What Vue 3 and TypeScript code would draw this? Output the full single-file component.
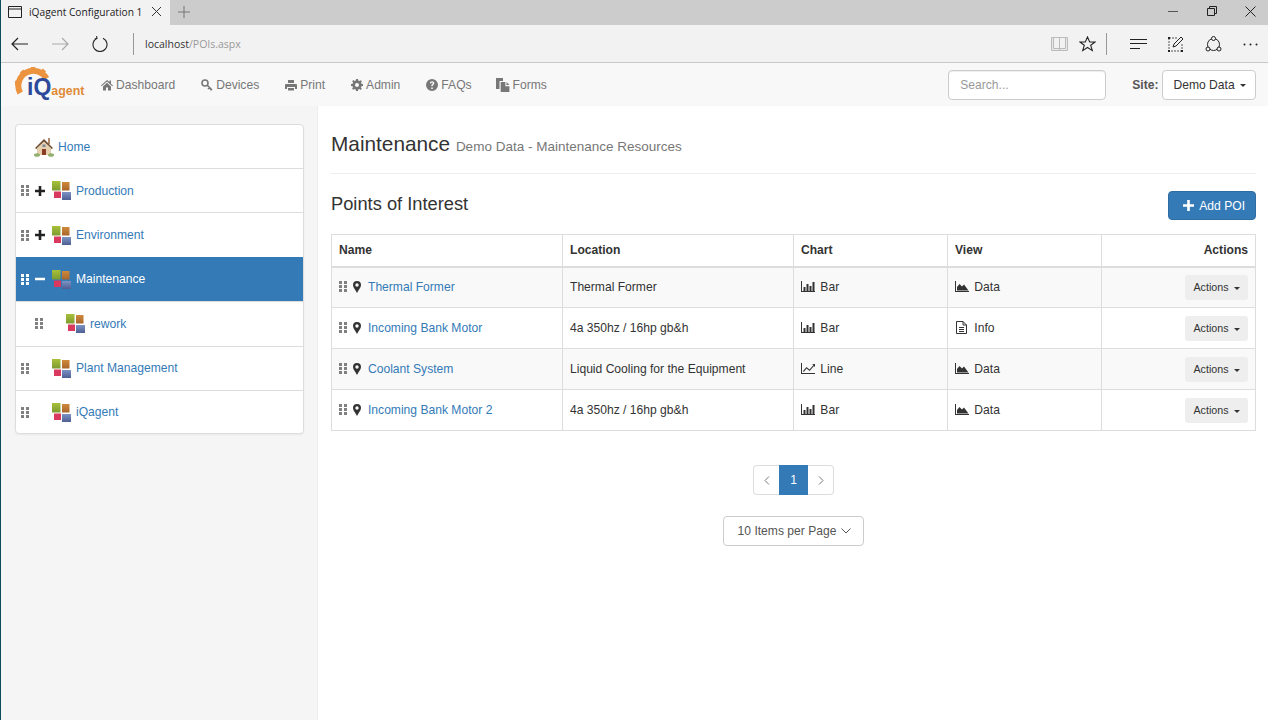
<script setup lang="ts">
type Node = { label: string; level: number; toggle?: 'plus' | 'minus'; active?: boolean };
type Row = { name: string; location: string; chart: 'Bar' | 'Line'; view: 'Data' | 'Info' };

const navItems = [
  { label: 'Dashboard', icon: 'home' },
  { label: 'Devices', icon: 'key' },
  { label: 'Print', icon: 'print' },
  { label: 'Admin', icon: 'cog' },
  { label: 'FAQs', icon: 'help' },
  { label: 'Forms', icon: 'copy' },
];

const tree: Node[] = [
  { label: 'Production', level: 0, toggle: 'plus' },
  { label: 'Environment', level: 0, toggle: 'plus' },
  { label: 'Maintenance', level: 0, toggle: 'minus', active: true },
  { label: 'rework', level: 1 },
  { label: 'Plant Management', level: 0 },
  { label: 'iQagent', level: 0 },
];

const rows: Row[] = [
  { name: 'Thermal Former', location: 'Thermal Former', chart: 'Bar', view: 'Data' },
  { name: 'Incoming Bank Motor', location: '4a 350hz / 16hp gb&h', chart: 'Bar', view: 'Info' },
  { name: 'Coolant System', location: 'Liquid Cooling for the Equipment', chart: 'Line', view: 'Data' },
  { name: 'Incoming Bank Motor 2', location: '4a 350hz / 16hp gb&h', chart: 'Bar', view: 'Data' },
];
</script>

<template>
  <div class="page">
    <!-- browser chrome -->
    <div class="tabbar">
      <div class="tab">
        <svg class="tab-icon" width="14" height="12" viewBox="0 0 14 12">
          <path d="M.5.5h13v11H.5zM.5 3h13" fill="none" stroke="#222" />
        </svg>
        <span class="tab-title">iQagent Configuration 1</span>
        <svg width="11" height="11" viewBox="0 0 11 11"><path d="M1 1l9 9M10 1l-9 9" stroke="#333" fill="none" /></svg>
      </div>
      <svg class="new-tab" width="12" height="12" viewBox="0 0 12 12"><path d="M6 0v12M0 6h12" stroke="#777" fill="none" /></svg>
      <div class="win-controls">
        <svg width="10" height="10" viewBox="0 0 10 10"><path d="M0 5.500h10" stroke="#555" fill="none" /></svg>
        <svg width="10" height="10" viewBox="0 0 10 10"><path d="M.5 2.500h7v7h-7zM2.500 2.500v-2h7v7h-2" stroke="#222" fill="none" /></svg>
        <svg width="11" height="11" viewBox="0 0 11 11"><path d="M.5.5l10 10M10.500.5l-10 10" stroke="#222" fill="none" /></svg>
      </div>
    </div>

    <div class="addressbar">
      <svg class="nav-btn" width="18" height="14" viewBox="0 0 18 14"><path d="M17 7H1M7 1L1 7l6 6" stroke="#222" stroke-width="1.200" fill="none" /></svg>
      <svg class="nav-btn dim" width="18" height="14" viewBox="0 0 18 14"><path d="M1 7h16M11 1l6 6-6 6" stroke="#aaa" stroke-width="1.200" fill="none" /></svg>
      <svg class="nav-btn reload" width="16" height="16" viewBox="0 0 16 16"><path d="M5 2.200A7 7 0 1 0 11 2.200M4.500 .2L5 2.400 2.800 3" stroke="#222" stroke-width="1.100" fill="none" /></svg>
      <span class="addr-sep"></span>
      <span class="url"><span class="host">localhost</span>/POIs.aspx</span>
      <div class="addr-tools">
        <svg width="17" height="14" viewBox="0 0 17 14"><path d="M.5.5h16v13H.5zM8.500.5v13M2.500.5v11h12V.500" stroke="#bbb" fill="#e8e8e8" /></svg>
        <svg class="star" width="17" height="16" viewBox="0 0 17 16"><path d="M8.500 1l2.200 5h5.300l-4.300 3.300 1.600 5.300-4.800-3.100-4.800 3.100 1.600-5.300L1 6h5.300z" stroke="#222" stroke-width="1.100" fill="none" /></svg>
        <span class="addr-sep tool-sep"></span>
        <svg class="hub" width="17" height="12" viewBox="0 0 17 12"><path d="M0 1.500h17M0 5.500h17M0 10.500h10" stroke="#222" fill="none" /></svg>
        <svg class="note" width="17" height="17" viewBox="0 0 17 17"><path d="M2 2v13h13M2 2h8M15 8v7" stroke="#555" stroke-dasharray="2 1" fill="none" /><path d="M6 11l1-3 7-7 2 2-7 7z" stroke="#222" fill="none" /><path d="M1 1h2v2H1zM14 14h2v2h-2zM1 14h2v2H1z" fill="#222" /></svg>
        <svg class="share" width="17" height="17" viewBox="0 0 17 17"><circle cx="8.500" cy="8.500" r="6" stroke="#222" fill="none" /><circle cx="8.500" cy="2.500" r="2" fill="#f2f2f2" stroke="#222" /><circle cx="3" cy="13" r="2" fill="#f2f2f2" stroke="#222" /><circle cx="14" cy="13" r="2" fill="#f2f2f2" stroke="#222" /></svg>
        <svg class="dots" width="15" height="3" viewBox="0 0 15 3"><circle cx="1.500" cy="1.500" r="1" fill="#222" /><circle cx="7.500" cy="1.500" r="1" fill="#222" /><circle cx="13.500" cy="1.500" r="1" fill="#222" /></svg>
      </div>
    </div>

    <!-- app navbar -->
    <nav class="navbar">
      <div class="logo">
        <svg class="gear" width="38" height="32" viewBox="0 0 38 32">
          <path d="M5.200 26A15 15 0 1 1 31.500 11.500" fill="none" stroke="#ec9340" stroke-width="6" />
          <path d="M18 0v4M6.500 4l3 3M29.500 3l-3 3M0 16h4" stroke="#ec9340" stroke-width="4.500" />
        </svg>
        <span class="logo-i">i</span><span class="logo-q">Q</span><span class="logo-rest">agent</span>
      </div>
      <ul class="nav-links">
        <li v-for="item in navItems" :key="item.label">
          <svg class="nav-icon" width="12" height="12" viewBox="0 0 12 12">
            <path v-if="item.icon === 'home'" d="M6 1L0 6.500l.7.700L6 2.500l5.300 4.700.7-.7-2-1.800V1.500H8.500v1.600zM2 7.500V11.500h3V8.500h2v3h3V7.500L6 3.800z" />
            <g v-else-if="item.icon === 'key'">
              <circle cx="4" cy="4" r="3" fill="none" stroke="currentColor" stroke-width="1.600" />
              <path d="M6 6l5 5M8.500 8.500l-1.500 1.500M10 10l-1 1" stroke="currentColor" stroke-width="1.600" fill="none" />
            </g>
            <path v-else-if="item.icon === 'print'" d="M3 1h6v3H3zM1 5h10a1 1 0 0 1 1 1v4h-2V8H2v2H0V6a1 1 0 0 1 1-1zM3 9h6v2.500H3z" />
            <path v-else-if="item.icon === 'cog'" fill-rule="evenodd" d="M5 0h2l.3 1.600 1.100.5L9.800 1.200l1.100 1.100-.9 1.400.5 1.100L12 5v2l-1.600.3-.5 1.100.9 1.400-1.100 1.100-1.400-.9-1.100.5L7 12H5l-.3-1.600-1.100-.5-1.400.9-1.100-1.100.9-1.400-.5-1.100L0 7V5l1.600-.3.500-1.100-.9-1.400 1.100-1.100 1.400.9 1.100-.5zM6 4a2 2 0 1 0 0 4 2 2 0 0 0 0-4z" />
            <path v-else-if="item.icon === 'help'" fill-rule="evenodd" d="M6 0a6 6 0 1 0 0 12A6 6 0 0 0 6 0zM5.200 8.500h1.600V10H5.200zM3.800 4.300C3.900 3 4.800 2.300 6.100 2.300c1.300 0 2.200.8 2.200 1.900 0 1-.6 1.400-1.100 1.800-.4.300-.5.500-.5 1.200H5.300c0-1 .2-1.500.8-1.900.4-.3.700-.6.700-1 0-.4-.3-.7-.8-.7-.5 0-.8.300-.8.800z" />
            <path v-else d="M0 0h6v2.500H3v7H0zM4 3.500h4V7h3.500v5H4zM9 3.500L11.500 6H9z" />
          </svg>
          {{ item.label }}
        </li>
      </ul>
      <div class="nav-right">
        <input class="search" type="text" placeholder="Search..." />
        <span class="site-label">Site:</span>
        <button class="site-btn">Demo Data <span class="caret"></span></button>
      </div>
    </nav>

    <div class="content">
      <aside class="sidebar">
        <div class="tree">
          <div class="tree-row home-row">
            <svg class="house" width="20" height="20" viewBox="0 0 20 20">
              <rect x="14" y="1" width="2" height="6" fill="#b08a6a" />
              <path d="M1 11L10 2l9 9-1.500 1L10 5l-7.500 7z" fill="#6b4a30" />
              <path d="M3 11l7-6.500 7 6.500v7H3z" fill="#e6cfae" />
              <rect x="8" y="12" width="4" height="6" fill="#8a3d26" />
              <rect x="8.500" y="7.500" width="3" height="2.500" fill="#7c8a96" />
              <ellipse cx="3" cy="18" rx="3" ry="1.800" fill="#8fae6a" />
              <ellipse cx="17" cy="18" rx="3" ry="1.800" fill="#8fae6a" />
            </svg>
            <a class="link">Home</a>
          </div>
          <div
            v-for="node in tree"
            :key="node.label"
            class="tree-row"
            :class="{ active: node.active, nested: node.level > 0 }"
          >
            <svg class="grip" width="8" height="11" viewBox="0 0 8 11">
              <path d="M0 0h3v3H0zM5 0h3v3H5zM0 4h3v3H0zM5 4h3v3H5zM0 8h3v3H0zM5 8h3v3H5z" />
            </svg>
            <span class="toggle">
              <svg v-if="node.toggle" width="10" height="10" viewBox="0 0 10 10">
                <path v-if="node.toggle === 'plus'" d="M3.700 0h2.600v3.700H10v2.600H6.300V10H3.700V6.300H0V3.700h3.700z" />
                <path v-else d="M0 3.700h10v2.600H0z" />
              </svg>
            </span>
            <svg class="folder" width="19" height="19" viewBox="0 0 19 19">
              <defs>
                <linearGradient id="fg" x1="0" y1="0" x2="0" y2="1"><stop offset="0" stop-color="#a8c13a" /><stop offset="1" stop-color="#7d9a30" /></linearGradient>
                <linearGradient id="fo" x1="0" y1="0" x2="0" y2="1"><stop offset="0" stop-color="#d08a3c" /><stop offset="1" stop-color="#a9662c" /></linearGradient>
                <linearGradient id="fb" x1="0" y1="0" x2="0" y2="1"><stop offset="0" stop-color="#7c93c4" /><stop offset="1" stop-color="#4e5f93" /></linearGradient>
              </defs>
              <rect x="0" y="0" width="8.500" height="9.500" fill="url(#fg)" />
              <rect x="10" y="1" width="7.500" height="8.500" fill="url(#fo)" />
              <rect x="2" y="10.500" width="7" height="6.500" fill="#d9385f" />
              <rect x="10" y="11" width="9" height="8" fill="url(#fb)" />
            </svg>
            <a class="link">{{ node.label }}</a>
          </div>
        </div>
      </aside>

      <main class="main">
        <div class="page-header">
          <h1>Maintenance <small>Demo Data - Maintenance Resources</small></h1>
        </div>

        <div class="section-head">
          <h2>Points of Interest</h2>
          <button class="add-btn">
            <svg width="11" height="11" viewBox="0 0 10 10"><path d="M3.800 0h2.400v3.800H10v2.400H6.200V10H3.800V6.200H0V3.800h3.800z" fill="#fff" /></svg>
            Add POI
          </button>
        </div>

        <table class="poi-table">
          <colgroup>
            <col class="col-wide" />
            <col class="col-wide" />
            <col class="col-mid" />
            <col class="col-mid" />
            <col />
          </colgroup>
          <thead>
            <tr>
              <th>Name</th>
              <th>Location</th>
              <th>Chart</th>
              <th>View</th>
              <th class="right">Actions</th>
            </tr>
          </thead>
          <tbody>
            <tr v-for="row in rows" :key="row.name">
              <td>
                <svg class="grip row-grip" width="8" height="11" viewBox="0 0 8 11">
                  <path d="M0 0h3v3H0zM5 0h3v3H5zM0 4h3v3H0zM5 4h3v3H5zM0 8h3v3H0zM5 8h3v3H5z" />
                </svg>
                <svg class="pin" width="8" height="12" viewBox="0 0 8 12">
                  <path fill-rule="evenodd" d="M4 0a4 4 0 0 1 4 4c0 2.500-2.500 5-4 8C2.500 9 0 6.500 0 4a4 4 0 0 1 4-4zm0 2.300a1.700 1.700 0 1 0 0 3.400 1.700 1.700 0 0 0 0-3.400z" />
                </svg>
                <a class="link">{{ row.name }}</a>
              </td>
              <td>{{ row.location }}</td>
              <td>
                <svg class="cell-icon" width="14" height="11" viewBox="0 0 14 11">
                  <path d="M0 0h1v10h13v1H0z" />
                  <path v-if="row.chart === 'Bar'" d="M2.500 6h2v4h-2zM5.500 3h2v7h-2zM8.500 5h2v5h-2zM11.500 1h2v9h-2z" />
                  <path v-else d="M2 8l3.500-4 3 2.500L12.500 2 11 1h3v3.200l-1-1.200-4.400 5-3-2.500L2.800 9z" />
                </svg>
                {{ row.chart }}
              </td>
              <td>
                <svg v-if="row.view === 'Data'" class="cell-icon" width="14" height="11" viewBox="0 0 14 11">
                  <path d="M0 0h1v10h13v1H0z" />
                  <path d="M2 9.500V6l2.500-3 2.500 2.500L9 3.500l4.500 6z" />
                </svg>
                <svg v-else class="cell-icon info-icon" width="11" height="13" viewBox="0 0 11 13">
                  <path d="M.5.5h6.500l3.500 3.500v8.500H.5zM7 .5V4h3.500M3 6.500h5M3 8.500h5M3 10.500h5" fill="none" stroke="#333" />
                </svg>
                {{ row.view }}
              </td>
              <td class="right">
                <button class="action-btn">Actions <span class="caret"></span></button>
              </td>
            </tr>
          </tbody>
        </table>

        <div class="pager">
          <span class="page-cell">
            <svg width="6" height="9" viewBox="0 0 6 9"><path d="M5 .5l-4 4 4 4" stroke="#777" fill="none" /></svg>
          </span>
          <span class="page-cell current">1</span>
          <span class="page-cell">
            <svg width="6" height="9" viewBox="0 0 6 9"><path d="M1 .5l4 4-4 4" stroke="#777" fill="none" /></svg>
          </span>
        </div>

        <div class="per-page">
          <button class="per-page-btn">
            10 Items per Page
            <svg width="10" height="6" viewBox="0 0 10 6"><path d="M.5.5L5 5 9.500.5" stroke="#555" fill="none" /></svg>
          </button>
        </div>
      </main>
    </div>
  </div>
</template>

<style>
html,
body {
  margin: 0;
  overflow: hidden;
}
</style>

<style scoped>
.page {
  display: flex;
  flex-direction: column;
  width: 1268px;
  height: 720px;
  overflow: hidden;
  box-sizing: border-box;
  border-left: 1px solid #0e4d5c;
  font-family: "Liberation Sans", Arial, sans-serif;
  font-size: 12.100px;
  color: #333;
  background: #fff;
}

.tabbar {
  display: flex;
  align-items: center;
  height: 25px;
  flex: none;
  background: #cccccc;
}

.tab {
  display: flex;
  align-items: center;
  width: 169px;
  height: 25px;
  box-sizing: border-box;
  padding: 0 0 2px 7px;
  background: #f2f2f2;
}

.tab-icon {
  margin-right: 7px;
}

.tab-title {
  width: 115px;
  overflow: hidden;
  white-space: nowrap;
  font-family: "Open Sans", sans-serif;
  font-size: 10.200px;
  color: #222;
  margin-right: 7px;
}

.new-tab {
  margin: 0 0 2px 8px;
}

.win-controls {
  display: flex;
  align-items: center;
  gap: 28.500px;
  margin-left: auto;
  padding: 0 12px 3px 0;
}

.addressbar {
  display: flex;
  align-items: center;
  height: 38px;
  flex: none;
  box-sizing: border-box;
  padding: 1px 0 0 10px;
  background: #f2f2f2;
  border-bottom: 1px solid #c8c8c8;
}

.nav-btn {
  margin-right: 22px;
}

.nav-btn.dim {
  margin-right: 23px;
}

.nav-btn.reload {
  margin-right: 25px;
}

.addr-sep {
  display: inline-block;
  width: 1px;
  height: 22px;
  background: #999;
  margin: 0 11px 0 0;
}

.url {
  font-family: "Open Sans", sans-serif;
  font-size: 10.500px;
  color: #999;
}

.host {
  color: #333;
}

.addr-tools {
  display: flex;
  align-items: center;
  margin-left: auto;
  padding-right: 10px;
}

.star {
  margin-left: 11px;
}

.tool-sep {
  margin: 0 0 0 10px;
}

.hub {
  margin-left: 23px;
}

.note {
  margin-left: 20px;
}

.share {
  margin-left: 21px;
}

.dots {
  margin-left: 21px;
}

.navbar {
  display: flex;
  align-items: center;
  height: 43px;
  flex: none;
  box-sizing: border-box;
  background: #f8f8f8;
  color: #777;
}

.logo {
  position: relative;
  display: flex;
  align-items: baseline;
  width: 72px;
  height: 32px;
  margin-left: 14px;
  padding-top: 7px;
  box-sizing: border-box;
  font-weight: 700;
}

.gear {
  position: absolute;
  left: 0;
  top: -2px;
}

.logo-i,
.logo-q {
  position: relative;
  color: #2d4a9a;
  font-size: 23px;
  line-height: 22px;
}

.logo-i {
  margin-left: 12px;
}

.logo-rest {
  position: relative;
  color: #e08a38;
  font-size: 12.400px;
}

.nav-links {
  display: flex;
  list-style: none;
  margin: 0 0 0 14px;
  padding: 0;
  gap: 26px;
}

.nav-links li {
  display: flex;
  align-items: center;
  gap: 3px;
  white-space: nowrap;
}

.nav-icon {
  fill: currentColor;
}

.nav-links li:last-child .nav-icon {
  width: 14px;
  height: 14px;
  margin-left: -2px;
}

.nav-right {
  display: flex;
  align-items: center;
  margin-left: auto;
  padding-right: 12px;
}

.search {
  width: 158px;
  height: 30px;
  box-sizing: border-box;
  padding: 0 11px;
  border: 1px solid #ccc;
  border-radius: 4px;
  background: #fff;
  font: inherit;
  box-shadow: inset 0 1px 1px rgba(0, 0, 0, 0.075);
}

.search::placeholder {
  color: #999;
}

.site-label {
  margin-left: 26px;
  font-weight: 700;
  color: #555;
}

.site-btn {
  height: 30px;
  margin-left: 4px;
  padding: 0 9px 0 10px;
  border: 1px solid #ccc;
  border-radius: 4px;
  background: #fff;
  font: inherit;
  color: #333;
}

.caret {
  display: inline-block;
  width: 0;
  height: 0;
  margin-left: 2px;
  vertical-align: middle;
  border-top: 3.500px solid;
  border-left: 3.500px solid transparent;
  border-right: 3.500px solid transparent;
}

.content {
  display: flex;
  flex: 1;
  min-height: 0;
}

.sidebar {
  width: 317px;
  flex: none;
  box-sizing: border-box;
  padding: 18px 13px 0 14px;
  background: #f5f5f5;
  border-right: 1px solid #eee;
}

.tree {
  background: #fff;
  border: 1px solid #ddd;
  border-radius: 4px;
  overflow: hidden;
  box-shadow: 0 1px 2px rgba(0, 0, 0, 0.05);
}

.tree-row {
  display: flex;
  align-items: center;
  height: 44.400px;
  box-sizing: border-box;
  padding-left: 5px;
  border-top: 1px solid #ddd;
}

.tree-row:first-child {
  border-top: 0;
  height: 43px;
}

.tree-row:last-child {
  height: 43.400px;
}

.home-row {
  padding-left: 18px;
}

.house {
  margin-right: 4px;
}

.tree-row.nested {
  padding-left: 19px;
}

.grip {
  fill: #808080;
  flex: none;
}

.toggle {
  display: flex;
  width: 10px;
  height: 10px;
  margin: 0 7px 0 6px;
  fill: #222;
}

.folder {
  flex: none;
  margin-right: 5px;
}

.link {
  color: #337ab7;
}

.tree-row.active {
  background: #337ab7;
  border-top-color: #337ab7;
}

.tree-row.active .link {
  color: #fff;
}

.tree-row.active .grip,
.tree-row.active .toggle {
  fill: #fff;
}

.main {
  flex: 1;
  min-width: 0;
  padding: 0 12px 0 13px;
}

.page-header {
  margin-top: 24px;
  padding-bottom: 12px;
  border-bottom: 1px solid #eee;
}

h1 {
  margin: 0;
  font-size: 20.800px;
  line-height: 28px;
  font-weight: 400;
}

h1 small {
  font-size: 13.500px;
  color: #777;
}

.section-head {
  display: flex;
  justify-content: space-between;
  align-items: flex-start;
  height: 60px;
  padding-top: 17px;
  box-sizing: border-box;
}

h2 {
  margin: 0;
  font-size: 18.300px;
  line-height: 26px;
  font-weight: 400;
}

.add-btn {
  display: flex;
  align-items: center;
  gap: 5px;
  height: 29px;
  padding: 0 10px 0 14px;
  border: 1px solid #2e6da4;
  border-radius: 4px;
  background: #337ab7;
  color: #fff;
  font: inherit;
}

.poi-table {
  width: 925px;
  table-layout: fixed;
  border-collapse: collapse;
  border: 1px solid #ddd;
}

.col-wide {
  width: 231px;
}

.col-mid {
  width: 154px;
}

th {
  height: 32px;
  padding: 0 7px;
  box-sizing: border-box;
  text-align: left;
  font-weight: 700;
  border: 1px solid #ddd;
  border-bottom-width: 2px;
}

td {
  height: 41px;
  padding: 0 7px;
  box-sizing: border-box;
  border: 1px solid #ddd;
}

tbody tr:nth-child(odd) {
  background: #f9f9f9;
}

.right {
  text-align: right;
}

.row-grip {
  margin-right: 6px;
  vertical-align: -1px;
}

.pin {
  fill: #333;
  margin-right: 7px;
  vertical-align: -2px;
}

.cell-icon {
  fill: #333;
  margin-right: 2px;
  vertical-align: -1px;
}

.info-icon {
  margin-left: 1px;
  margin-right: 4px;
  vertical-align: -2px;
}

.action-btn {
  height: 25px;
  padding: 0 8.500px;
  border: 0;
  border-radius: 3px;
  background: #eeeeee;
  color: #333;
  font: inherit;
  font-size: 10.700px;
}

.pager {
  display: flex;
  justify-content: center;
  margin-top: 34px;
}

.page-cell {
  display: flex;
  align-items: center;
  justify-content: center;
  width: 26px;
  height: 30px;
  box-sizing: border-box;
  border: 1px solid #ddd;
  background: #fff;
}

.page-cell:first-child {
  border-radius: 4px 0 0 4px;
  border-right: 0;
}

.page-cell:last-child {
  border-radius: 0 4px 4px 0;
  border-left: 0;
}

.page-cell.current {
  width: 29px;
  background: #337ab7;
  border-color: #337ab7;
  color: #fff;
}

.per-page {
  display: flex;
  justify-content: center;
  margin-top: 21px;
}

.per-page-btn {
  display: flex;
  align-items: center;
  gap: 5px;
  height: 30px;
  padding: 0 12px 0 14px;
  border: 1px solid #ccc;
  border-radius: 4px;
  background: #fff;
  color: #555;
  font: inherit;
}
</style>
